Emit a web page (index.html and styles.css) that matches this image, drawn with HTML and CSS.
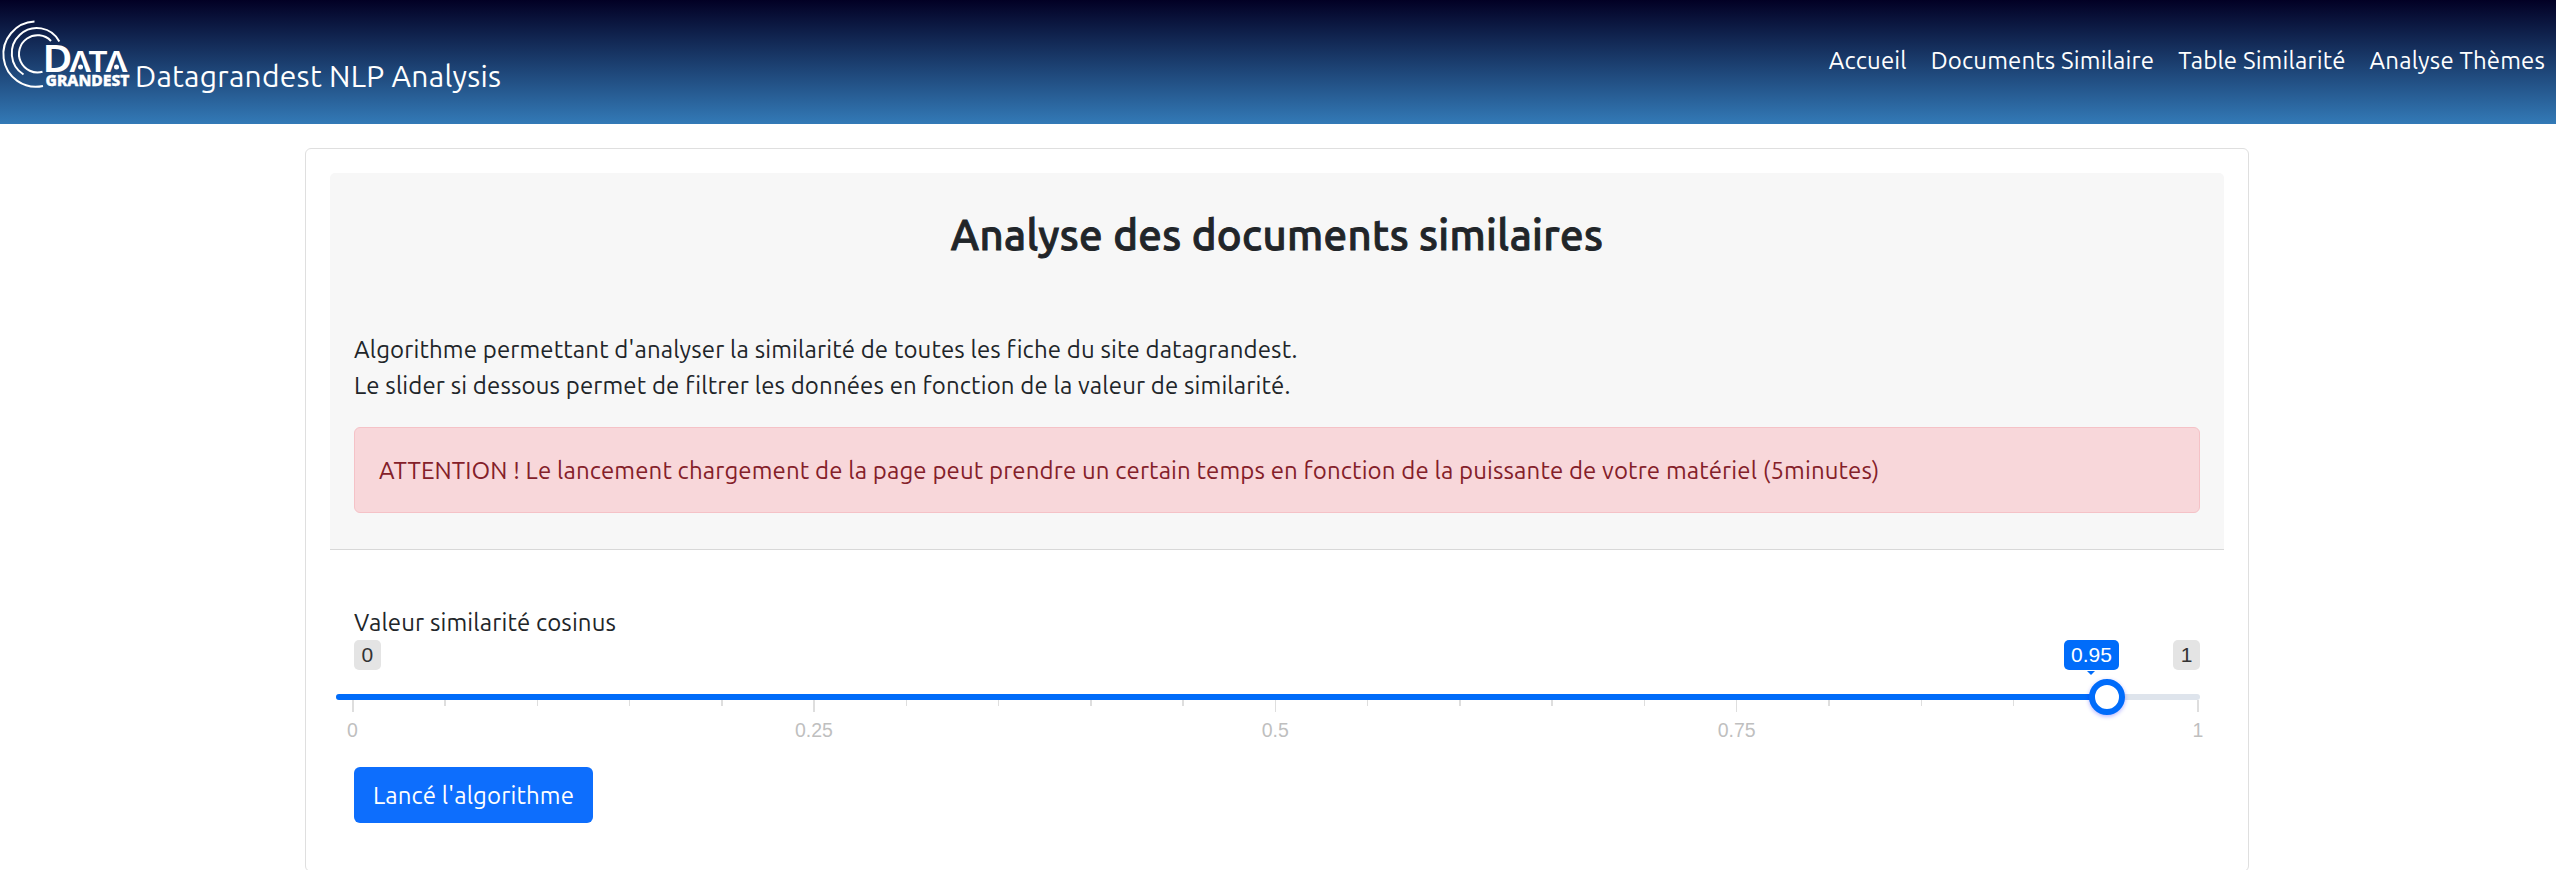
FILE: index.html
```html
<!DOCTYPE html>
<html lang="fr">
<head>
<meta charset="utf-8">
<title>Datagrandest NLP Analysis</title>
<link rel="stylesheet" href="styles.css">
</head>
<body>
<header class="navbar">
  <a class="brand">
    <svg class="logo" width="132" height="92" viewBox="0 0 132 92" role="img" aria-label="Data Grand Est">
      <g class="logo-arcs">
        <path d="M34.5 21.6A32.6 32.6 0 1 0 43 86"/>
        <path d="M59.3 41.5A25.2 25.2 0 1 0 23.5 74.5"/>
        <path d="M51 41A18.6 18.6 0 1 0 42.5 71.8"/>
      </g>
      <g class="logo-text">
        <text class="logo-word" x="42.5" y="71.5" font-size="37" textLength="30" lengthAdjust="spacingAndGlyphs">D</text>
        <text class="logo-word" x="69.5" y="71.5" font-size="28" textLength="21.5" lengthAdjust="spacingAndGlyphs">Λ</text>
        <text class="logo-word" x="88.5" y="71.5" font-size="28" textLength="19" lengthAdjust="spacingAndGlyphs">T</text>
        <text class="logo-word" x="105.5" y="71.5" font-size="28" textLength="22" lengthAdjust="spacingAndGlyphs">Λ</text>
        <circle cx="80.5" cy="67" r="2.5"/>
        <circle cx="116.5" cy="67" r="2.5"/>
        <text class="logo-sub" x="45.5" y="86" font-size="15" textLength="84" lengthAdjust="spacingAndGlyphs">GRANDEST</text>
      </g>
    </svg>
    <span class="brand-name">Datagrandest NLP Analysis</span>
  </a>
  <nav class="nav">
    <a>Accueil</a><a>Documents Similaire</a><a>Table Similarité</a><a>Analyse Thèmes</a>
  </nav>
</header>
<main class="card">
  <section class="card-header">
    <h1>Analyse des documents similaires</h1>
    <p>Algorithme permettant d'analyser la similarité de toutes les fiche du site datagrandest.<br>Le slider si dessous permet de filtrer les données en fonction de la valeur de similarité.</p>
    <div class="alert">ATTENTION ! Le lancement chargement de la page peut prendre un certain temps en fonction de la puissante de votre matériel (5minutes)</div>
  </section>
  <section class="card-body">
    <label>Valeur similarité cosinus</label>
    <div class="slider">
      <div class="limits"><span class="badge">0</span><span class="badge">1</span></div>
      <div class="track"><div class="fill"></div></div>
      <div class="grid">
        <i class="big"></i><i></i><i></i><i></i><i></i><i class="big"></i><i></i><i></i><i></i><i></i><i class="big"></i><i></i><i></i><i></i><i></i><i class="big"></i><i></i><i></i><i></i><i></i><i class="big"></i>
      </div>
      <div class="scale"><span>0</span><span>0.25</span><span>0.5</span><span>0.75</span><span>1</span></div>
      <span class="badge value">0.95</span>
      <span class="handle"></span>
    </div>
    <button class="btn">Lancé l'algorithme</button>
  </section>
</main>
</body>
</html>
```
FILE: styles.css
```css
* { box-sizing: border-box; }
body {
  margin: 0;
  background: #fff;
  color: #212529;
  font: 24px/36px Ubuntu, "Noto Sans", sans-serif;
  letter-spacing: .135px;
  overflow: hidden;
}
.navbar {
  height: 124px;
  display: flex;
  justify-content: space-between;
  align-items: center;
  padding-right: 11px;
  color: #fff;
  background: linear-gradient(#020024, #337ab7);
}
.brand { display: flex; align-self: flex-start; }
.logo { display: block; flex: none; letter-spacing: 0; }
.logo-arcs { fill: none; stroke: #fff; stroke-width: 2; }
.logo-text { fill: #fff; }
.logo-word { font-family: "Noto Sans", sans-serif; font-weight: 600; }
.logo-sub { font-family: "Noto Sans", sans-serif; font-weight: 800; stroke: #fff; stroke-width: .4; }
.brand-name { font-size: 30px; line-height: 45px; margin: 54px 0 0 3px; letter-spacing: .26px; white-space: nowrap; }
.nav { display: flex; gap: 24px; margin-top: -3px; white-space: nowrap; letter-spacing: .15px; }
.card {
  width: 1944px;
  height: 724px;
  margin: 24px auto 0 305px;
  padding: 24px;
  border: 1px solid #dfdfdf;
  border-radius: 6px;
}
.card-header {
  height: 377px;
  padding: 37px 24px 0;
  background: #f7f7f7;
  border-bottom: 1px solid #d8d8d8;
  border-radius: 5px 5px 0 0;
}
h1 {
  margin: 0 0 72px;
  font-size: 42px;
  line-height: 50px;
  font-weight: 500;
  text-align: center;
  letter-spacing: .34px;
  -webkit-text-stroke: .9px #212529;
}
p { margin: 0 0 23px; white-space: nowrap; }
.alert {
  height: 86px;
  padding: 25px 24px 0;
  border: 1px solid #f5c2c7;
  border-radius: 6px;
  background: #f8d7da;
  color: #842029;
  white-space: nowrap;
}
.card-body { padding: 54px 24px 0; }
label { display: block; height: 36px; padding-top: 1px; }
.slider {
  position: relative;
  height: 127px;
  font-family: "Liberation Sans", Arial, sans-serif;
  font-size: 21px;
  letter-spacing: 0;
}
.limits { display: flex; justify-content: space-between; }
.badge { display: block; height: 30px; padding: 0 7.5px; border-radius: 5px; background: #e4e4e4; color: #333; line-height: 30px; }
.track { height: 6px; margin: 24px 0 0 -18px; border-radius: 3px; background: #dee4ec; overflow: hidden; }
.fill { width: 1771px; height: 6px; background: #006cfa; }
.grid { display: flex; justify-content: space-between; margin: 0 1px 0 -2px; height: 12px; }
.grid i { width: 1.5px; height: 6px; background: #dedede; }
.grid .big { height: 12px; }
.scale { display: flex; justify-content: space-between; margin: 6px -18px 0 -21.5px; font-size: 19.5px; line-height: 24px; color: #bfbfbf; }
.scale span { width: 40px; text-align: center; }
.value { position: absolute; left: 1710px; top: 0; width: 55px; background: #006cfa; color: #fff; text-align: center; padding: 0; }
.value::after {
  content: "";
  position: absolute;
  left: 23px;
  top: 31px;
  border: 4.5px solid transparent;
  border-top-color: #006cfa;
  border-bottom: 0;
}
.handle {
  position: absolute;
  left: 1735px;
  top: 39px;
  width: 36px;
  height: 36px;
  border: 6px solid #006cfa;
  border-radius: 50%;
  background: #fff;
  box-shadow: 0 1.5px 4.5px rgba(0, 0, 255, .3);
}
.btn {
  display: block;
  width: 239px;
  height: 56px;
  padding: 2px 0 0;
  border: 0;
  border-radius: 6px;
  background: #0d6efd;
  color: #fff;
  font: inherit;
  letter-spacing: .14px;
}
```
